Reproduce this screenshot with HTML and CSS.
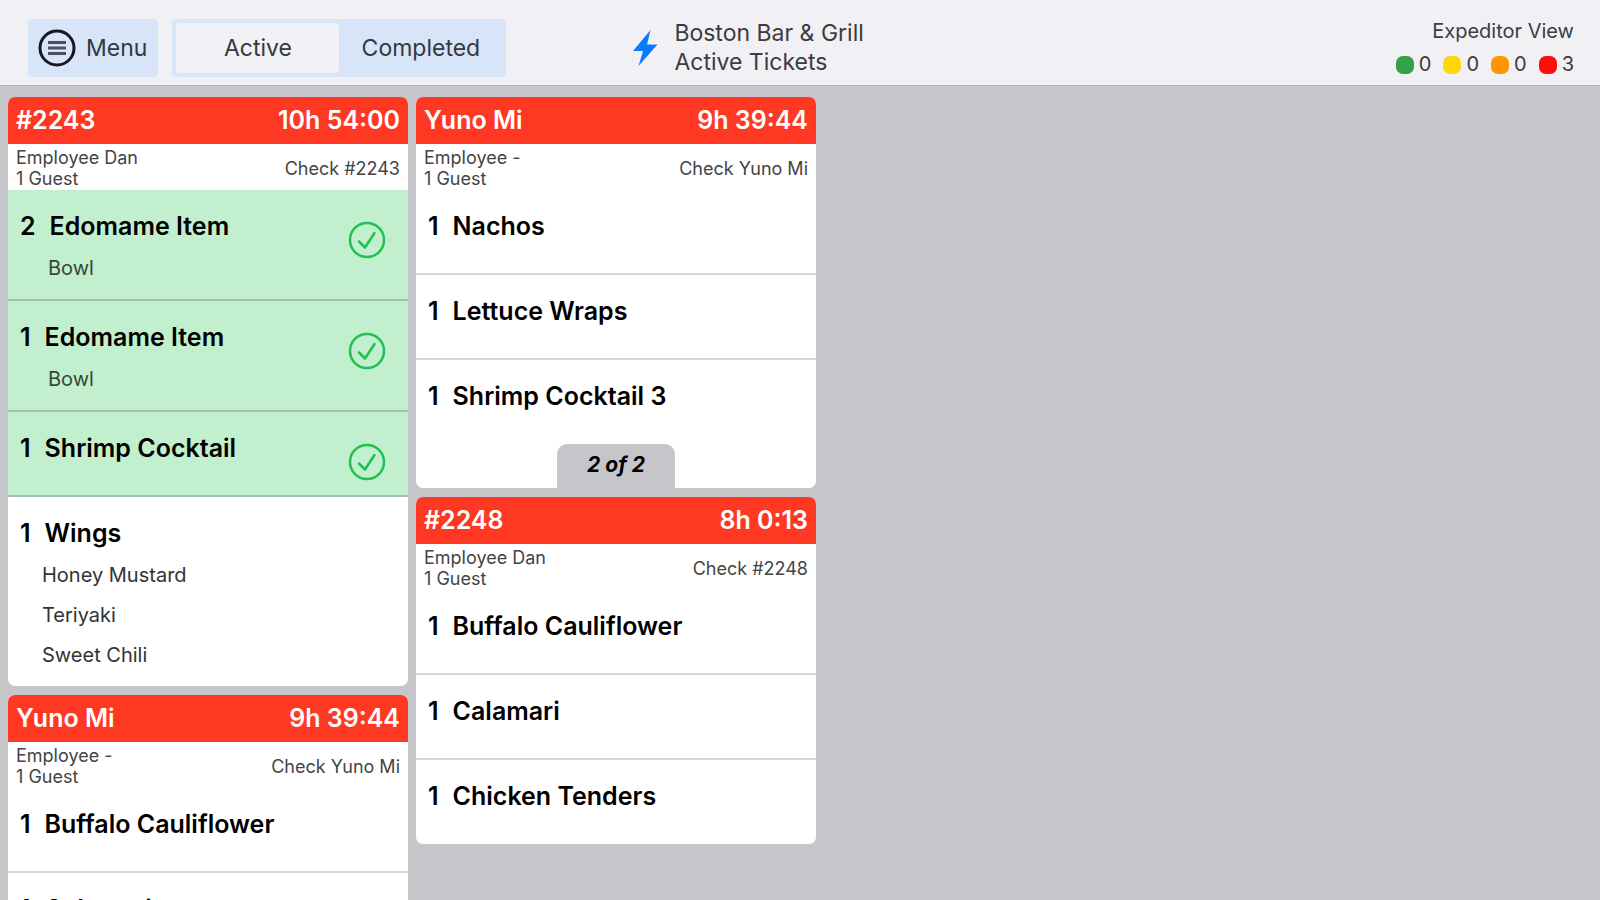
FILE: index.html
```html
<!DOCTYPE html>
<html lang="en">
<head>
  <meta charset="utf-8">
  <title>Expeditor View</title>
  <link rel="stylesheet" href="styles.css">
</head>
<body>
  <svg width="0" height="0" class="sprite">
    <symbol id="check" viewBox="0 0 38 38">
      <circle cx="19" cy="19" r="17" fill="none" stroke="currentColor" stroke-width="2.5"/>
      <path d="M11 20.5l6 6L26.500 12" fill="none" stroke="currentColor" stroke-width="2.5" stroke-linecap="round" stroke-linejoin="round"/>
    </symbol>
  </svg>

  <header class="topbar">
    <button type="button" class="menu-btn">
      <svg class="menu-icon" viewBox="0 0 38 38">
        <circle cx="19" cy="19" r="17" fill="none" stroke="#15181f" stroke-width="3"/>
        <path d="M10 13.500h18M10 19h18M10 24.500h18" stroke="#4c525d" stroke-width="3"/>
      </svg>
      Menu
    </button>
    <nav class="tabs">
      <button type="button" class="tab active">Active</button>
      <button type="button" class="tab">Completed</button>
    </nav>
    <div class="place">
      <svg class="bolt" viewBox="0 0 26 38">
        <path d="M18.500 1L1 22h10L6.500 37L25.500 15.500H15z" fill="#0a7aff"/>
      </svg>
      <div>Boston Bar &amp; Grill<br>Active Tickets</div>
    </div>
    <div class="status">
      <div>Expeditor View</div>
      <div class="counts">
        <span class="count"><i class="dot green"></i>0</span>
        <span class="count"><i class="dot yellow"></i>0</span>
        <span class="count"><i class="dot orange"></i>0</span>
        <span class="count"><i class="dot red"></i>3</span>
      </div>
    </div>
  </header>

  <main class="board">
    <div class="column">
      <section class="ticket">
        <h2 class="ticket-head"><span>#2243</span><span>10h 54:00</span></h2>
        <div class="meta"><div>Employee Dan<br>1 Guest</div><div>Check #2243</div></div>
        <ul class="items">
          <li class="item done">
            <div class="name"><span class="qty">2</span>Edomame Item</div>
            <ul class="mods"><li>Bowl</li></ul>
            <svg class="check"><use href="#check"/></svg>
          </li>
          <li class="item done">
            <div class="name"><span class="qty">1</span>Edomame Item</div>
            <ul class="mods"><li>Bowl</li></ul>
            <svg class="check"><use href="#check"/></svg>
          </li>
          <li class="item done">
            <div class="name"><span class="qty">1</span>Shrimp Cocktail</div>
            <svg class="check"><use href="#check"/></svg>
          </li>
          <li class="item">
            <div class="name"><span class="qty">1</span>Wings</div>
            <ul class="mods wide"><li>Honey Mustard</li><li>Teriyaki</li><li>Sweet Chili</li></ul>
          </li>
        </ul>
      </section>

      <section class="ticket">
        <h2 class="ticket-head"><span>Yuno Mi</span><span>9h 39:44</span></h2>
        <div class="meta"><div>Employee -<br>1 Guest</div><div>Check Yuno Mi</div></div>
        <ul class="items">
          <li class="item"><div class="name"><span class="qty">1</span>Buffalo Cauliflower</div></li>
          <li class="item"><div class="name"><span class="qty">1</span>Calamari</div></li>
        </ul>
      </section>
    </div>

    <div class="column">
      <section class="ticket">
        <h2 class="ticket-head"><span>Yuno Mi</span><span>9h 39:44</span></h2>
        <div class="meta"><div>Employee -<br>1 Guest</div><div>Check Yuno Mi</div></div>
        <ul class="items">
          <li class="item"><div class="name"><span class="qty">1</span>Nachos</div></li>
          <li class="item"><div class="name"><span class="qty">1</span>Lettuce Wraps</div></li>
          <li class="item"><div class="name"><span class="qty">1</span>Shrimp Cocktail 3</div></li>
        </ul>
        <div class="page">2 of 2</div>
      </section>

      <section class="ticket">
        <h2 class="ticket-head"><span>#2248</span><span>8h 0:13</span></h2>
        <div class="meta"><div>Employee Dan<br>1 Guest</div><div>Check #2248</div></div>
        <ul class="items">
          <li class="item"><div class="name"><span class="qty">1</span>Buffalo Cauliflower</div></li>
          <li class="item"><div class="name"><span class="qty">1</span>Calamari</div></li>
          <li class="item"><div class="name"><span class="qty">1</span>Chicken Tenders</div></li>
        </ul>
      </section>
    </div>
  </main>
</body>
</html>
```

FILE: styles.css
```css
* {
  box-sizing: border-box;
}
body {
  margin: 0;
  height: 100vh;
  overflow: hidden;
  display: flex;
  flex-direction: column;
  background-color: #c6c5ca;
  color: #000;
  font-family: Inter, "Liberation Sans", sans-serif;
}
ul {
  list-style: none;
  margin: 0;
  padding: 0;
}
.sprite {
  position: absolute;
}

/* Top bar */
.topbar {
  display: flex;
  align-items: center;
  flex-shrink: 0;
  padding: 15px 26px 4px 28px;
  background-color: #f1f0f5;
  border-bottom: 1px solid #b5b5ba;
  font-size: 23px;
  color: #3c3c40;
}
.topbar button {
  border: none;
  font: inherit;
  color: #343840;
  cursor: pointer;
}
.menu-btn {
  display: flex;
  align-items: center;
  gap: 10px;
  height: 58px;
  padding: 0 11px 0 10px;
  border-radius: 4px;
  background-color: #d8e4f8;
}
.menu-icon {
  width: 38px;
  height: 38px;
}
.tabs {
  display: flex;
  height: 58px;
  margin-left: 14px;
  padding: 4px;
  border-radius: 4px;
  background-color: #d8e4f8;
}
.tab {
  width: 163px;
  padding: 0;
  border-radius: 3px;
  background-color: transparent;
}
.tab.active {
  background-color: #f2f1f6;
}
.place {
  display: flex;
  align-items: center;
  gap: 16px;
  margin-left: 126px;
  line-height: 29px;
}
.bolt {
  width: 26px;
  height: 38px;
}
.status {
  margin-left: auto;
  font-size: 20px;
  line-height: 33px;
  text-align: right;
}
.counts {
  display: flex;
  justify-content: flex-end;
  gap: 12px;
}
.count {
  display: flex;
  align-items: center;
  gap: 5px;
}
.dot {
  width: 18px;
  height: 18px;
  border-radius: 7px;
}
.green { background-color: #34a047; }
.yellow { background-color: #ffd60a; }
.orange { background-color: #ff9500; }
.red { background-color: #ff0f0a; }

/* Tickets */
.board {
  display: flex;
  gap: 8px;
  flex: 1;
  min-height: 0;
  padding: 11px 8px 0;
}
.column {
  width: 25vw;
}
.ticket {
  margin-bottom: 9px;
  border-radius: 7px;
  overflow: hidden;
  background-color: #fff;
}
.ticket-head {
  display: flex;
  justify-content: space-between;
  margin: 0;
  padding: 0 8px;
  background-color: #ff3823;
  color: #fff;
  font-size: 25px;
  font-weight: 600;
  line-height: 47px;
}
.meta {
  display: flex;
  justify-content: space-between;
  align-items: center;
  padding: 3px 8px 1px;
  font-size: 18px;
  line-height: 21px;
  color: #444;
}
.item {
  position: relative;
  min-height: 85px;
  padding: 23px 12px 11px;
  border-bottom: 2px solid #d8d8dc;
}
.item:last-child {
  min-height: 84px;
  border-bottom: none;
}
.item.done {
  background-color: #c2efce;
  border-bottom-color: #a3c2ad;
}
.name {
  font-size: 25px;
  font-weight: 600;
  line-height: 26px;
}
.qty {
  margin-right: 14px;
}
.mods {
  margin-top: 9px;
  padding-left: 28px;
  font-size: 20px;
  line-height: 40px;
  color: #333;
}
.mods.wide {
  padding-left: 22px;
}
.done .mods {
  color: #34493a;
}
.check {
  position: absolute;
  top: 31px;
  right: 22px;
  width: 38px;
  height: 38px;
  color: #1fc150;
}
.page {
  width: 118px;
  margin: 0 auto;
  border-radius: 10px 10px 0 0;
  background-color: #c6c5ca;
  font-size: 21px;
  font-style: italic;
  font-weight: 700;
  line-height: 42px;
  padding-bottom: 2px;
  text-align: center;
}
```
